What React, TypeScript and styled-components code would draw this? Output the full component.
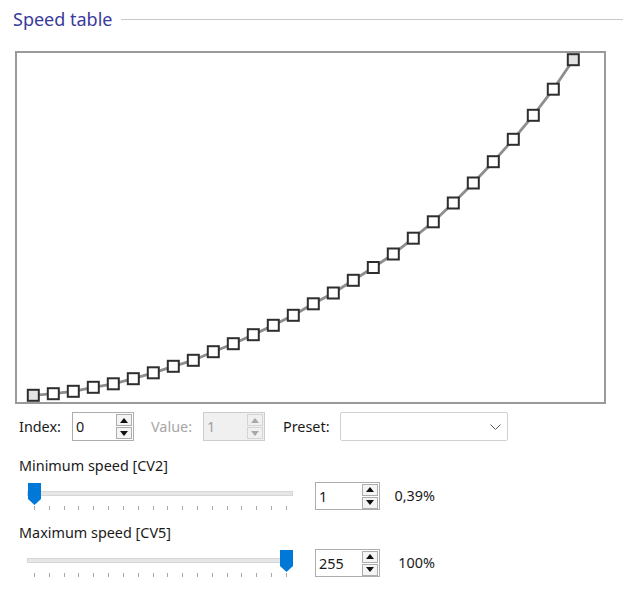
import React from 'react';
import styled, { createGlobalStyle } from 'styled-components';

const GlobalStyle = createGlobalStyle`
  body {
    margin: 0;
    background: #ffffff;
    font-family: "Noto Sans", "Open Sans", sans-serif;
    color: #1a1a1a;
  }
`;

// measured centres of the 28 speed steps, in chart coordinates
const STEP_Y = [
  342.3, 340.7, 338.3, 334.3, 330.8, 325.7, 319.8, 313.3, 307.3, 298.7,
  290.7, 281.7, 272.3, 262.3, 250.8, 240, 227.3, 214.5, 201, 185.2,
  168.8, 150, 130, 108.7, 86.3, 62.3, 36.2, 6.7,
];

const Page = styled.div`
  display: flex;
  flex-direction: column;
  width: 623px;
  height: 591px;
  overflow: hidden;
`;

const Header = styled.div`
  display: flex;
  align-items: center;
  height: 38px;
  padding-left: 13px;
`;

const Title = styled.span`
  font-size: 18px;
  color: #3a3a9c;
  line-height: 24px;
`;

const Rule = styled.div`
  flex: 1;
  height: 1px;
  margin-left: 9px;
  background: #c8c8c8;
`;

const ChartFrame = styled.div`
  margin: 13px 0 0 15px;
  width: 591px;
  height: 353px;
  box-sizing: border-box;
  border: 2px solid #9a9a9a;
  background: #ffffff;

  svg {
    display: block;
  }
`;

const ControlsRow = styled.div`
  display: flex;
  align-items: center;
  height: 29px;
  margin-top: 8px;
  padding-left: 19px;
`;

const FieldLabel = styled.span<{ $width: number; $disabled?: boolean }>`
  width: ${({ $width }) => $width}px;
  flex: none;
  font-size: 14.4px;
  color: ${({ $disabled }) => ($disabled ? '#a6a6a6' : '#1a1a1a')};
`;

const Gap = styled.div<{ $width: number }>`
  width: ${({ $width }) => $width}px;
  flex: none;
`;

const SpinBox = styled.div<{ $width: number; $height: number; $disabled?: boolean }>`
  display: flex;
  align-items: center;
  justify-content: space-between;
  flex: none;
  width: ${({ $width }) => $width}px;
  height: ${({ $height }) => $height}px;
  box-sizing: border-box;
  border: 1px solid ${({ $disabled }) => ($disabled ? '#cccccc' : '#adadad')};
  background: ${({ $disabled }) => ($disabled ? '#f0f0f0' : '#ffffff')};
  padding: 0 1px 0 3px;
`;

const SpinValue = styled.span<{ $disabled?: boolean }>`
  font-size: 14.4px;
  color: ${({ $disabled }) => ($disabled ? '#a0a0a0' : '#1a1a1a')};
`;

const SpinButtons = styled.div`
  display: flex;
  flex-direction: column;
  gap: 1px;
`;

const SpinButton = styled.div<{ $disabled?: boolean }>`
  display: flex;
  align-items: center;
  justify-content: center;
  width: 16px;
  height: 12px;
  box-sizing: border-box;
  border: 1px solid ${({ $disabled }) => ($disabled ? '#d4d4d4' : '#adadad')};
  background: ${({ $disabled }) => ($disabled ? '#f0f0f0' : '#f4f4f4')};
`;

const Combo = styled.div`
  display: flex;
  align-items: center;
  justify-content: flex-end;
  flex: none;
  width: 168px;
  height: 29px;
  box-sizing: border-box;
  border: 1px solid #d0d0d0;
  border-radius: 2px;
  padding-right: 6px;
  background: #ffffff;
`;

const SectionLabel = styled.div<{ $top: number }>`
  margin-top: ${({ $top }) => $top}px;
  padding-left: 19px;
  font-size: 14.4px;
  line-height: 20px;
`;

const SliderRow = styled.div<{ $top: number }>`
  display: flex;
  align-items: flex-start;
  margin-top: ${({ $top }) => $top}px;
  padding-left: 27px;
`;

const Slider = styled.div`
  position: relative;
  width: 266px;
  height: 30px;
  flex: none;
`;

const Track = styled.div`
  position: absolute;
  left: 0;
  right: 0;
  top: 9px;
  height: 5px;
  box-sizing: border-box;
  border: 1px solid #d6d6d6;
  background: #e7e7e7;
`;

const Thumb = styled.svg`
  position: absolute;
  top: 1px;
`;

const Ticks = styled.div`
  position: absolute;
  left: 7px;
  top: 24px;
  width: 253px;
  display: flex;
  justify-content: space-between;
`;

const Tick = styled.div`
  width: 1px;
  height: 4px;
  background: #a8a8a8;
`;

const Percent = styled.span`
  width: 55px;
  flex: none;
  text-align: right;
  font-size: 14.4px;
  line-height: 28px;
`;

const Arrow: React.FC<{ up?: boolean; disabled?: boolean }> = ({ up, disabled }) => (
  <svg width="8" height="5" viewBox="0 0 8 5">
    <polygon
      points={up ? '4,0 8,5 0,5' : '0,0 8,0 4,5'}
      fill={disabled ? '#a8a8a8' : '#111111'}
    />
  </svg>
);

const Spin: React.FC<{ value: string; width: number; height: number; disabled?: boolean }> = ({
  value,
  width,
  height,
  disabled,
}) => (
  <SpinBox $width={width} $height={height} $disabled={disabled}>
    <SpinValue $disabled={disabled}>{value}</SpinValue>
    <SpinButtons>
      <SpinButton $disabled={disabled}>
        <Arrow up disabled={disabled} />
      </SpinButton>
      <SpinButton $disabled={disabled}>
        <Arrow disabled={disabled} />
      </SpinButton>
    </SpinButtons>
  </SpinBox>
);

const SpeedSlider: React.FC<{ value: number }> = ({ value }) => {
  const frac = (value - 1) / 254;
  return (
    <Slider>
      <Track />
      <Thumb width="13" height="22" viewBox="0 0 13 22" style={{ left: 0.5 + frac * 252 }}>
        <polygon points="0,0 13,0 13,16 6.5,22 0,16" fill="#0078d7" />
      </Thumb>
      <Ticks>
        {Array.from({ length: 18 }).map((_, i) => (
          <Tick key={i} />
        ))}
      </Ticks>
    </Slider>
  );
};

const SpeedChart: React.FC = () => {
  const pts = STEP_Y.map((y, i) => [16.3 + i * 20, y]);
  return (
    <ChartFrame>
      <svg width="587" height="349" viewBox="0 0 587 349">
        <polyline
          points={pts.map((p) => p.join(',')).join(' ')}
          fill="none"
          stroke="#8e8e8e"
          strokeWidth="2.8"
        />
        {pts.map(([x, y], i) => (
          <rect
            key={i}
            x={x - 5.5}
            y={y - 5.5}
            width="11"
            height="11"
            fill={i === 0 || i === pts.length - 1 ? '#e3e3e3' : '#ffffff'}
            stroke="#2e2e2e"
            strokeWidth="2"
          />
        ))}
      </svg>
    </ChartFrame>
  );
};

export default function App() {
  return (
    <Page>
      <GlobalStyle />
      <Header>
        <Title>Speed table</Title>
        <Rule />
      </Header>

      <SpeedChart />

      <ControlsRow>
        <FieldLabel $width={53}>Index:</FieldLabel>
        <Spin value="0" width={62} height={29} />
        <Gap $width={17} />
        <FieldLabel $width={52} $disabled>Value:</FieldLabel>
        <Spin value="1" width={62} height={29} disabled />
        <Gap $width={18} />
        <FieldLabel $width={57}>Preset:</FieldLabel>
        <Combo>
          <svg width="11" height="6" viewBox="0 0 11 6">
            <polyline points="0.5,0.5 5.5,5.5 10.5,0.5" fill="none" stroke="#606060" strokeWidth="1" />
          </svg>
        </Combo>
      </ControlsRow>

      <SectionLabel $top={15}>Minimum speed [CV2]</SectionLabel>
      <SliderRow $top={6}>
        <SpeedSlider value={1} />
        <Gap $width={22} />
        <Spin value="1" width={65} height={28} />
        <Percent>0,39%</Percent>
      </SliderRow>

      <SectionLabel $top={11}>Maximum speed [CV5]</SectionLabel>
      <SliderRow $top={6}>
        <SpeedSlider value={255} />
        <Gap $width={22} />
        <Spin value="255" width={65} height={28} />
        <Percent>100%</Percent>
      </SliderRow>
    </Page>
  );
}
